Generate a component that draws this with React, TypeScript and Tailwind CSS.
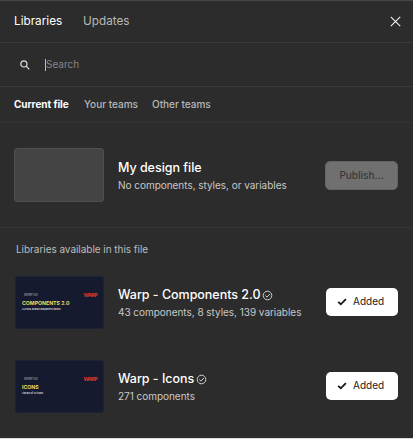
import type { ReactNode } from "react";

function Check() {
  return (
    <svg className="h-[8px] w-[10px] shrink-0" viewBox="0 0 10 8" fill="none" stroke="#1a1a1a" strokeWidth="1.9">
      <path d="M1.2 3.9 3.8 6.3 8.9 1.2" />
    </svg>
  );
}

function Verified() {
  return (
    <svg className="ml-[2px] h-[11px] w-[11px] shrink-0" viewBox="0 0 11 11" fill="none" stroke="#d0d0d0">
      <circle cx="5.5" cy="5.5" r="4.3" />
      <path d="M3.3 5.5 5 7.1 7.9 4" />
    </svg>
  );
}

function Cover({ title, note }: { title: string; note: string }) {
  return (
    <div className="flex h-[53px] w-[89px] shrink-0 flex-col rounded-[3px] border border-[#1c2236] bg-[#151a2e] pl-[6px] pr-[6px] pt-[14px] whitespace-nowrap">
      <div className="flex h-[9px] items-center justify-between">
        <span className="pl-[2px] text-[3px] leading-[9px] text-[#b9bbc5]">WARP DS</span>
        <span className="text-[5.4px] font-bold leading-[9px] tracking-[-0.7px] text-[#d8392c]">WARP</span>
      </div>
      <div className="h-[7px] text-[5.2px] font-bold leading-[7px] text-[#e8db62]">{title}</div>
      <div className="h-[5px] text-[2.4px] font-bold leading-[5px] text-[#d5d6dc]">{note}</div>
    </div>
  );
}

function Item({ cover, title, detail, verified, action }: { cover: ReactNode; title: string; detail: string; verified?: boolean; action: ReactNode }) {
  return (
    <div className="flex items-center whitespace-nowrap pr-[15px]">
      {cover}
      <div className="ml-[14px] grow pt-[2px]">
        <div className="flex h-[18px] items-center text-[12.5px] font-medium leading-[18px] tracking-[-0.03px] text-white">
          {title}
          {verified && <Verified />}
        </div>
        <div className="h-[17px] text-[10px] leading-[17px] tracking-[-0.03px] text-[#c8c8c8]">{detail}</div>
      </div>
      {action}
    </div>
  );
}

function Added() {
  return (
    <button className="mb-[2px] flex h-[28px] w-[72px] items-center rounded-[5px] bg-white pl-[11px] text-[10px] text-[#202020]">
      <Check />
      <span className="ml-[6px]">Added</span>
    </button>
  );
}

export default function App() {
  return (
    <div className="flex h-[439px] w-[413px] flex-col overflow-hidden whitespace-nowrap border-t border-b border-t-[#464646] border-b-[#dedede] bg-[#2c2c2c] font-['Inter',sans-serif]">
      <header className="flex h-[42px] items-center border-b border-[#3b3b3b] pl-[14px] pr-[12px] text-[11.75px]">
        <span className="w-[69px] pt-px text-white">Libraries</span>
        <span className="grow pt-px text-[#b8b8b8]">Updates</span>
        <svg className="h-[11px] w-[11px]" viewBox="0 0 11 11" stroke="#f0f0f0" strokeWidth="1.1">
          <path d="M.8.8 10.2 10.2M10.2.8.8 10.2" />
        </svg>
      </header>
      <div className="flex h-[44px] items-center border-b border-[#3b3b3b] pl-[20px] text-[10px]">
        <svg className="h-[10px] w-[10px]" viewBox="0 0 10 10" fill="none" stroke="#e4e4e4" strokeWidth="1.2">
          <circle cx="3.9" cy="3.9" r="3.1" />
          <path d="M6.2 6.2 9.3 9.3" />
        </svg>
        <span className="ml-[15px] h-[12px] w-px bg-[#bdbdbd]" />
        <span className="text-[#858585]">Search</span>
      </div>
      <nav className="flex h-[36px] items-center border-b border-[#343434] pl-[14px] text-[10px] font-medium text-[#b8b8b8]">
        <span className="w-[70px] font-bold tracking-[-0.05px] text-white">Current file</span>
        <span className="w-[68px]">Your teams</span>
        <span>Other teams</span>
      </nav>
      <section className="h-[105px] border-b border-[#353535] pl-[14px] pt-[25px]">
        <Item
          cover={<div className="h-[54px] w-[90px] shrink-0 rounded-[3px] border border-[#505050] bg-[#444444]" />}
          title="My design file"
          detail="No components, styles, or variables"
          action={<button className="h-[29px] w-[73px] rounded-[5px] border border-[#646464] bg-[#707070] text-[10px] font-medium text-[#383838]">Publish...</button>}
        />
      </section>
      <section className="pl-[15px] pt-[12px]">
        <h2 className="h-[18px] pl-px text-[10px] leading-[18px] tracking-[-0.04px] text-[#bdbdbd]">Libraries available in this file</h2>
        <div className="mt-[18px] flex flex-col gap-[31px]">
          <Item cover={<Cover title="COMPONENTS 2.0" note="A cross-brand component library" />} title="Warp - Components 2.0" detail="43 components, 8 styles, 139 variables" verified action={<Added />} />
          <Item cover={<Cover title="ICONS" note="Library of UI icons" />} title="Warp - Icons" detail="271 components" verified action={<Added />} />
        </div>
      </section>
    </div>
  );
}
